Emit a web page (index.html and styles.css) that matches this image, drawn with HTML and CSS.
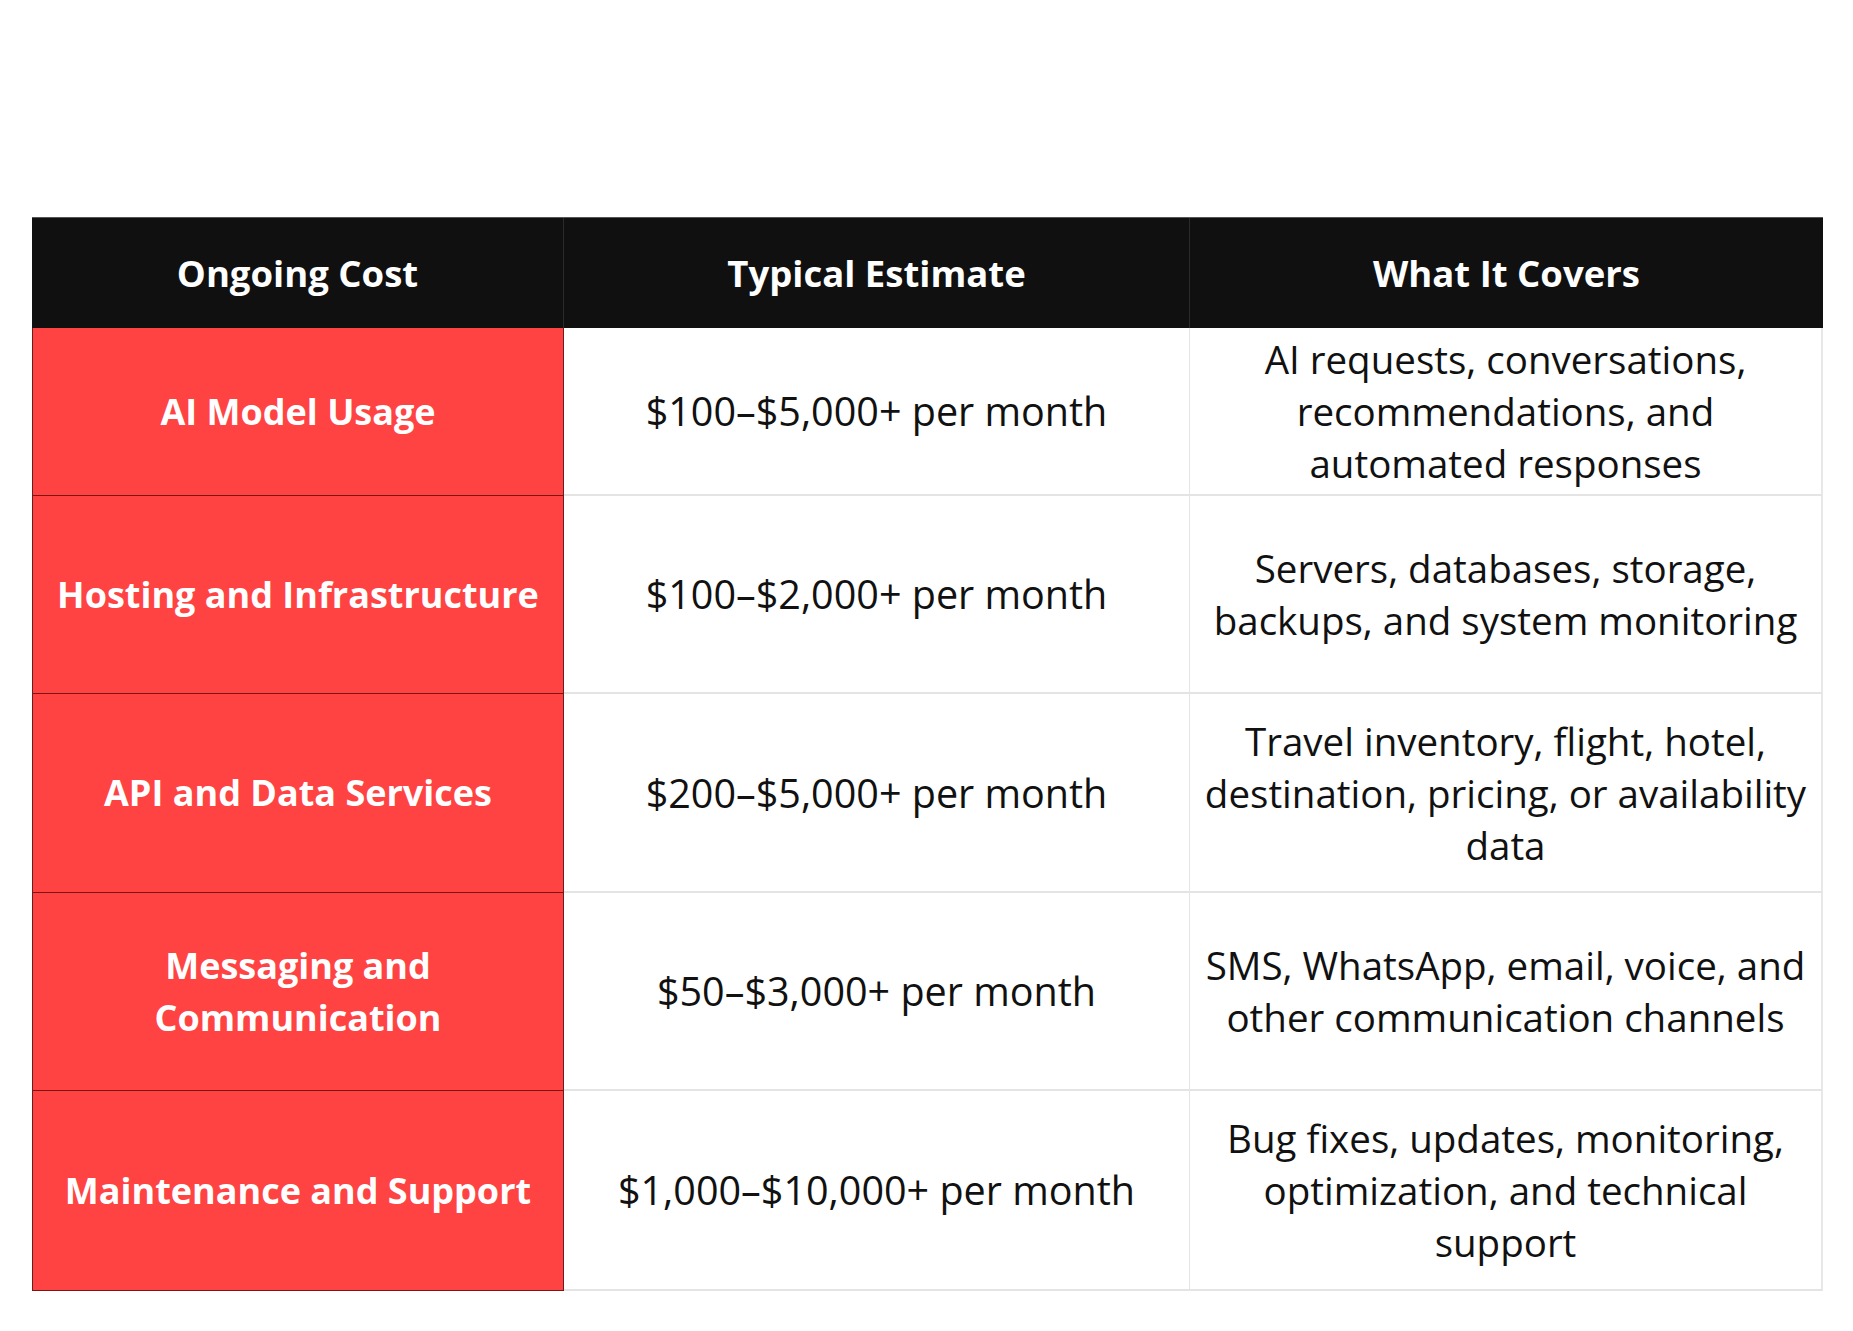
FILE: index.html
```html
<!DOCTYPE html>
<html lang="en">
<head>
<meta charset="utf-8">
<title>Ongoing Costs</title>
<link rel="stylesheet" href="styles.css">
</head>
<body>
<div class="table">
  <div class="cell head">Ongoing Cost</div>
  <div class="cell head">Typical Estimate</div>
  <div class="cell head last">What It Covers</div>

  <div class="cell name">AI Model Usage</div>
  <div class="cell price">$100–$5,000+ per month</div>
  <div class="cell desc">AI requests, conversations, recommendations, and automated responses</div>

  <div class="cell name">Hosting and Infrastructure</div>
  <div class="cell price">$100–$2,000+ per month</div>
  <div class="cell desc">Servers, databases, storage, backups, and system monitoring</div>

  <div class="cell name">API and Data Services</div>
  <div class="cell price">$200–$5,000+ per month</div>
  <div class="cell desc">Travel inventory, flight, hotel, destination, pricing, or availability data</div>

  <div class="cell name">Messaging and Communication</div>
  <div class="cell price">$50–$3,000+ per month</div>
  <div class="cell desc">SMS, WhatsApp, email, voice, and other communication channels</div>

  <div class="cell name">Maintenance and Support</div>
  <div class="cell price">$1,000–$10,000+ per month</div>
  <div class="cell desc">Bug fixes, updates, monitoring, optimization, and technical support</div>
</div>
</body>
</html>
```

FILE: styles.css
```css
html, body {
  margin: 0;
  background: #ffffff;
}
body {
  padding: 217px 0 0 32px;
  font-family: "Open Sans", "Noto Sans", sans-serif;
}
.table {
  display: grid;
  width: 1791px;
  grid-template-columns: 532px 626px 633px;
  grid-template-rows: 110px 168px 198px 199px 198px 200px;
  border-top: 1px solid #555555;
}
.cell {
  display: flex;
  align-items: center;
  justify-content: center;
  text-align: center;
  box-sizing: border-box;
  padding: 0 10px;
}
.head {
  background: #111010;
  color: #ffffff;
  font-weight: 700;
  font-size: 36.5px;
  border-right: 1px solid #2a2a2a;
}
.head.last {
  border-right: none;
}
.name {
  background: #ff4343;
  color: #ffffff;
  font-weight: 700;
  font-size: 36px;
  line-height: 52px;
  border-left: 1px solid #6b1c1c;
  border-right: 1px solid #6b1c1c;
  border-bottom: 1px solid #7a1515;
  padding: 0 6px;
}
.price, .desc {
  color: #111111;
  line-height: 52px;
  border-bottom: 2px solid #e4e4e4;
}
.price {
  font-size: 39.5px;
  border-right: 1px solid #e4e4e4;
}
.desc {
  font-size: 38.5px;
  border-right: 2px solid #e8e8e8;
}
```
